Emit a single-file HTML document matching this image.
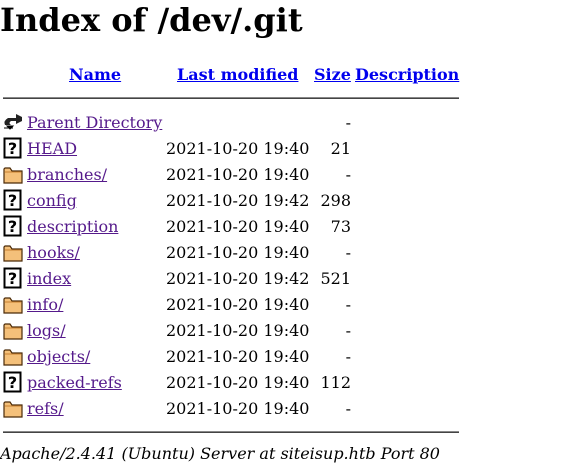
<!DOCTYPE html>
<html><head><style>
body{margin:0;background:#fff;font-family:"DejaVu Serif",serif;font-size:16px;color:#000;position:relative;width:569px;height:463px;overflow:hidden}
.a{position:absolute;white-space:nowrap;line-height:20px}
a{color:#551a8b;text-decoration:underline}
.h a{color:#0000ee;font-weight:bold}
h1{position:absolute;left:0;top:0;margin:0;font-size:32px;line-height:40px;font-weight:bold}
.hr{position:absolute;left:3px;width:456px;height:0;border-top:1px solid #888;border-bottom:1px solid #444}
.ic{position:absolute;left:3px;width:20px;height:22px}
.s{text-align:right;width:40px;left:311px}
</style></head><body>
<h1>Index of /dev/.git</h1>
<div class="a h" style="left:69px;top:65px"><a>Name</a></div>
<div class="a h" style="left:177px;top:65px"><a>Last modified</a></div>
<div class="a h" style="left:314px;top:65px"><a>Size</a></div>
<div class="a h" style="left:355px;top:65px"><a>Description</a></div>
<div class="hr" style="top:97px"></div>
<svg class="ic" style="top:111px" viewBox="0 0 20 22"><path d="M13 3 L19 6 L19 10 L13 13 L13 10 L8 10 Q5 12 8 14 L2 14 Q0 10 5 7 L13 7 Z" fill="#222"/><path d="M4 15 L10 15 L7 18 Z M1 17 L10 17" stroke="#000" fill="#000"/></svg>
<div class="a" style="left:27px;top:113px"><a>Parent Directory</a></div>
<div class="a s" style="top:113px">-</div>
<div id="rows"></div>
<div class="hr" style="top:431px"></div>
<div class="a" style="left:0;top:444px;font-style:italic">Apache/2.4.41 (Ubuntu) Server at siteisup.htb Port 80</div>
<script>
var r=[["HEAD","19:40","21",0],["branches/","19:40","-",1],["config","19:42","298",0],["description","19:40","73",0],["hooks/","19:40","-",1],["index","19:42","521",0],["info/","19:40","-",1],["logs/","19:40","-",1],["objects/","19:40","-",1],["packed-refs","19:40","112",0],["refs/","19:40","-",1]];
var h="";
var q='<svg viewBox="0 0 20 22" width="20" height="22"><rect x="1.5" y="1.5" width="16" height="19" fill="#fff" stroke="#000" stroke-width="2"/><text x="9.5" y="17" font-family="DejaVu Sans" font-weight="bold" font-size="16" text-anchor="middle">?</text></svg>';
var f='<svg viewBox="0 0 20 22" width="20" height="22"><path d="M1 6 L1 20 L19 20 L19 8 L9 8 L7 5 L2 5 Z" fill="#f4c07a" stroke="#4a2a08" stroke-width="1.2"/><path d="M2 9 L18 9" stroke="#c88030"/></svg>';
r.forEach(function(e,i){var t=139+26*i;
h+='<div class="ic" style="top:'+(t-2)+'px">'+(e[3]?f:q)+'</div>';
h+='<div class="a" style="left:27px;top:'+t+'px"><a>'+e[0]+'</a></div>';
h+='<div class="a" style="left:166px;top:'+t+'px">2021-10-20 '+e[1]+'</div>';
h+='<div class="a s" style="top:'+t+'px">'+e[2]+'</div>';});
document.getElementById("rows").outerHTML=h;
</script>
</body></html>
